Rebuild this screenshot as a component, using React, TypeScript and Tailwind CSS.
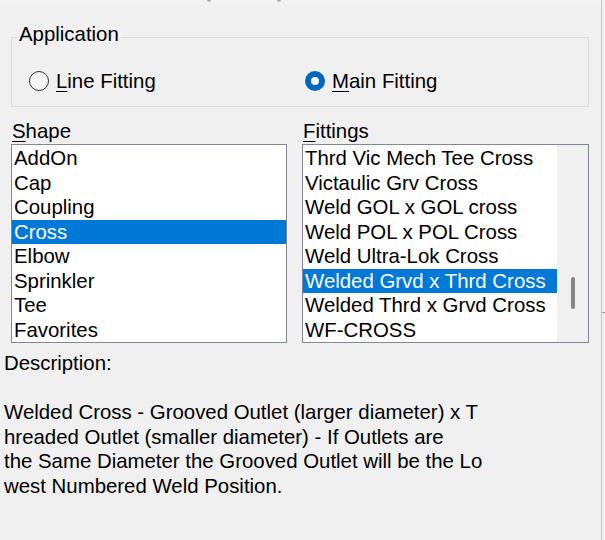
import React from "react";

const shapes = ["AddOn", "Cap", "Coupling", "Cross", "Elbow", "Sprinkler", "Tee", "Favorites"];
const fittings = [
  "Thrd Vic Mech Tee Cross",
  "Victaulic Grv Cross",
  "Weld GOL x GOL cross",
  "Weld POL x POL Cross",
  "Weld Ultra-Lok Cross",
  "Welded Grvd x Thrd Cross",
  "Welded Thrd x Grvd Cross",
  "WF-CROSS",
];

function Radio({ checked, label, u }: { checked: boolean; label: string; u: string }) {
  return (
    <div className="flex items-center gap-[7px]">
      {checked ? (
        <div className="w-[20px] h-[20px] rounded-full bg-[#0067c0] flex items-center justify-center">
          <div className="w-[8px] h-[8px] rounded-full bg-white" />
        </div>
      ) : (
        <div className="w-[20px] h-[20px] rounded-full border border-[#333333] bg-[#f5f5f5]" />
      )}
      <span>
        <span className="underline underline-offset-[3px] decoration-1">{u}</span>
        {label}
      </span>
    </div>
  );
}

export default function App() {
  return (
    <div
      className="w-[605px] h-[540px] bg-[#f0f0f0] text-black text-[20.4px] leading-[24.5px] flex overflow-hidden"
      style={{ fontFamily: '"Liberation Sans", Arial, sans-serif' }}
    >
      <div className="w-[601px] flex flex-col">
        <div className="h-[16px] bg-gradient-to-b from-[#f3f3f3] to-[#f0f0f0] flex">
          <div className="ml-[207px] w-[4px] h-[2px] bg-[#b0b0b0] rounded-b" />
          <div className="ml-[66px] w-[4px] h-[2px] bg-[#b0b0b0] rounded-b" />
        </div>
        {/* Group box */}
        <div className="relative ml-[11px] mt-[21px] w-[578px] h-[70px] border border-[#dcdcdc]">
          <div className="absolute left-[5px] top-[-16px] px-[2px] bg-[#f0f0f0] leading-[24px]">Application</div>
          <div className="flex mt-[31px] ml-[17px]">
            <div className="w-[276px]">
              <Radio checked={false} u="L" label="ine Fitting" />
            </div>
            <Radio checked={true} u="M" label="ain Fitting" />
          </div>
        </div>
        {/* Lists */}
        <div className="flex mt-[12px] ml-[11px] gap-[15px]">
          <div className="flex flex-col w-[276px]">
            <div className="pl-[1px] leading-[24px] h-[25px]">
              <span className="underline underline-offset-[3px] decoration-1">S</span>hape
            </div>
            <div className="border border-[#828790] bg-white h-[199px] pt-[1px] overflow-hidden">
              {shapes.map((s) => (
                <div
                  key={s}
                  className={
                    "h-[24.5px] pl-[2px] whitespace-nowrap " +
                    (s === "Cross" ? "bg-[#0078d7] text-white" : "")
                  }
                >
                  {s}
                </div>
              ))}
            </div>
          </div>
          <div className="flex flex-col w-[287px]">
            <div className="pl-[1px] leading-[24px] h-[25px]">
              <span className="underline underline-offset-[3px] decoration-1">F</span>ittings
            </div>
            <div className="border border-[#828790] bg-white h-[199px] flex overflow-hidden">
              <div className="flex-1 pt-[1px]">
                {fittings.map((s) => (
                  <div
                    key={s}
                    className={
                      "h-[24.5px] pl-[2px] whitespace-nowrap " +
                      (s === "Welded Grvd x Thrd Cross" ? "bg-[#0078d7] text-white" : "")
                    }
                  >
                    {s}
                  </div>
                ))}
              </div>
              <div className="w-[31px] bg-[#f0f0f0] flex justify-center">
                <div className="mt-[132px] w-[4px] h-[32px] rounded-full bg-[#858585]" />
              </div>
            </div>
          </div>
        </div>
        {/* Description */}
        <div className="ml-[4px] mt-[8px] flex flex-col whitespace-nowrap">
          <div>Description:</div>
          <div className="h-[24.5px]" />
          <div>Welded Cross - Grooved Outlet (larger diameter) x T</div>
          <div>hreaded Outlet (smaller diameter) - If Outlets are</div>
          <div>the Same Diameter the Grooved Outlet will be the Lo</div>
          <div>west Numbered Weld Position.</div>
        </div>
      </div>
      <div className="w-[1px] bg-[#c8c8c8]" />
      <div className="flex-1 flex flex-col">
        <div className="h-[312px]" />
        <div className="h-[1px] bg-[#a0a0a0]" />
      </div>
    </div>
  );
}
